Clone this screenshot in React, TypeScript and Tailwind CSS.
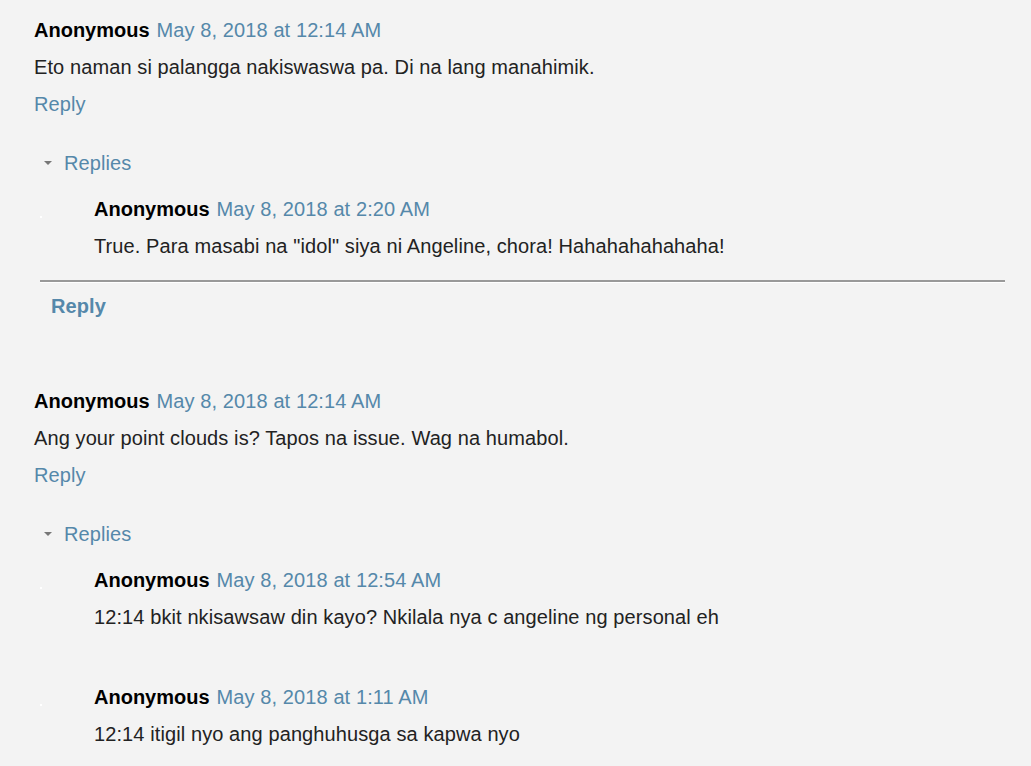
import React from "react";

type Reply = { date: string; body: string };
type Thread = { date: string; body: string; replies: Reply[]; footer: boolean };

const THREADS: Thread[] = [
  {
    date: "May 8, 2018 at 12:14 AM",
    body: "Eto naman si palangga nakiswaswa pa. Di na lang manahimik.",
    replies: [
      {
        date: "May 8, 2018 at 2:20 AM",
        body: 'True. Para masabi na "idol" siya ni Angeline, chora! Hahahahahahaha!',
      },
    ],
    footer: true,
  },
  {
    date: "May 8, 2018 at 12:14 AM",
    body: "Ang your point clouds is? Tapos na issue. Wag na humabol.",
    replies: [
      {
        date: "May 8, 2018 at 12:54 AM",
        body: "12:14 bkit nkisawsaw din kayo? Nkilala nya c angeline ng personal eh",
      },
      {
        date: "May 8, 2018 at 1:11 AM",
        body: "12:14 itigil nyo ang panghuhusga sa kapwa nyo",
      },
    ],
    footer: false,
  },
];

function Header({ date }: { date: string }) {
  return (
    <div className="flex gap-[7px] h-[28px] items-center">
      <span className="font-bold tracking-normal text-[#000]">Anonymous</span>
      <a className="text-[#5588aa]">{date}</a>
    </div>
  );
}

function ReplyItem({ reply }: { reply: Reply }) {
  return (
    <div className="relative pl-[60px]">
      <div className="absolute left-[6px] top-[21px] h-[2px] w-[2px] bg-white" />
      <Header date={reply.date} />
      <p className="mt-[9px] h-[28px] flex items-center">{reply.body}</p>
    </div>
  );
}

function ThreadBlock({ thread }: { thread: Thread }) {
  return (
    <div>
      <Header date={thread.date} />
      <p className="mt-[9px] h-[28px] flex items-center">{thread.body}</p>
      <a className="mt-[9px] h-[28px] flex items-center text-[#5588aa]">Reply</a>
      <div className="mt-[31px] flex h-[28px] items-center">
        <span className="ml-[10px] mr-[12px] h-0 w-0 border-x-[4px] border-t-[4px] border-x-transparent border-t-[#777]" />
        <span className="text-[#5588aa]">Replies</span>
      </div>
      <div className="mt-[18px] flex flex-col gap-[52px]">
        {thread.replies.map((r, i) => (
          <ReplyItem key={i} reply={r} />
        ))}
      </div>
      {thread.footer ? (
        <div className="ml-[6px] mt-[20px] mr-[26px]">
          <div className="h-[2px] bg-[#999]" />
          <div className="h-[1px] bg-white" />
          <a className="ml-[11px] mt-[9px] h-[28px] flex items-center font-bold text-[#5588aa]">
            Reply
          </a>
        </div>
      ) : null}
    </div>
  );
}

export default function App() {
  return (
    <div className="min-h-[766px] w-[1031px] bg-[#f3f3f3] pl-[34px] pt-[16px] text-[20px] leading-[28px] tracking-[0.1px] text-[#222] font-['Liberation_Sans',Arial,sans-serif] overflow-hidden">
      <div className="flex flex-col gap-[67px]">
        {THREADS.map((t, i) => (
          <ThreadBlock key={i} thread={t} />
        ))}
      </div>
    </div>
  );
}
